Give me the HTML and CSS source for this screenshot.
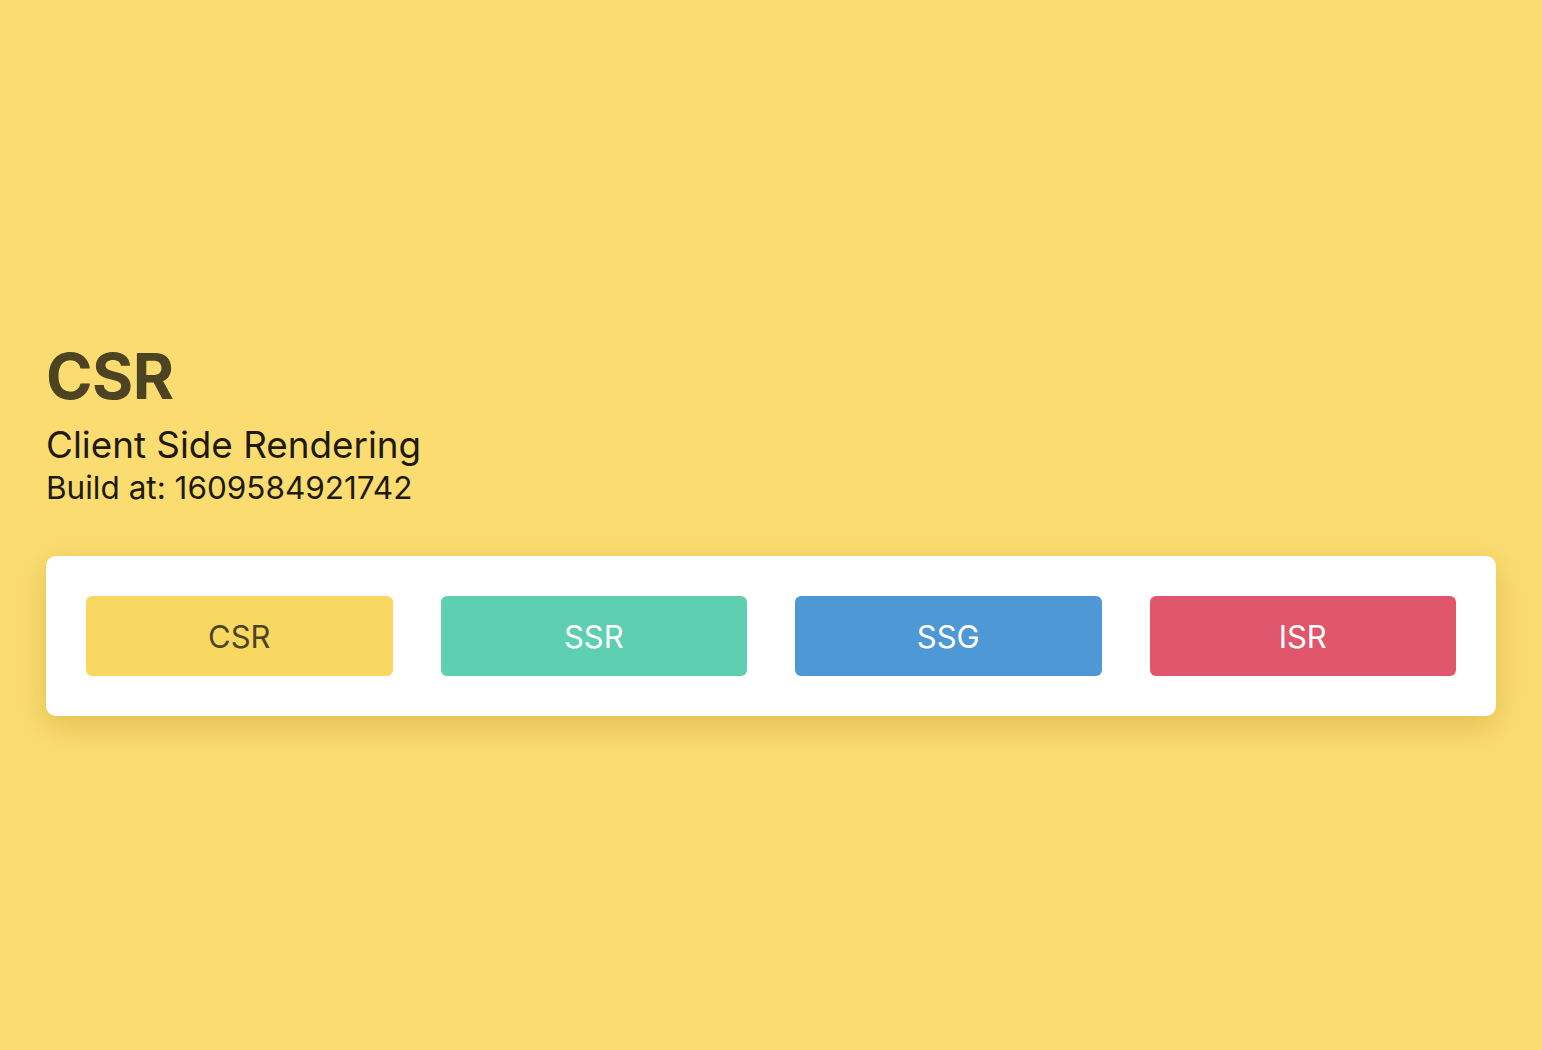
FILE: index.html
```html
<!DOCTYPE html>
<html lang="en">
<head>
<meta charset="utf-8">
<title>CSR</title>
<link rel="stylesheet" href="styles.css">
</head>
<body>
<main class="page">
  <header class="intro">
    <h1 class="title">CSR</h1>
    <p class="subtitle">Client Side Rendering</p>
    <p class="build">Build at: 1609584921742</p>
  </header>
  <nav class="card">
    <a class="btn btn-csr" href="#">CSR</a>
    <a class="btn btn-ssr" href="#">SSR</a>
    <a class="btn btn-ssg" href="#">SSG</a>
    <a class="btn btn-isr" href="#">ISR</a>
  </nav>
</main>
</body>
</html>
```

FILE: styles.css
```css
html, body {
  margin: 0;
  height: 100%;
}
body {
  background: #fadc70;
  font-family: Inter, "Noto Sans", sans-serif;
  color: #1d1a0c;
}
.page {
  height: 100%;
  box-sizing: border-box;
  padding: 0 46px;
  display: flex;
  flex-direction: column;
  justify-content: center;
}
.intro {
  margin-bottom: 47px;
}
.title {
  margin: 0 0 5px;
  font-size: 63px;
  font-weight: 700;
  line-height: 84px;
  color: #4b4322;
  letter-spacing: -0.5px;
}
.subtitle {
  margin: 0;
  font-size: 36.8px;
  line-height: 44px;
}
.build {
  margin: 0;
  font-size: 31.5px;
  line-height: 42px;
}
.card {
  background: #fff;
  border-radius: 10px;
  padding: 40px;
  display: grid;
  grid-template-columns: repeat(4, 1fr);
  gap: 48px;
  box-shadow: 0 10px 30px rgba(180, 140, 30, 0.35);
}
.btn {
  height: 80px;
  border-radius: 6px;
  display: flex;
  align-items: center;
  justify-content: center;
  text-decoration: none;
  font-size: 31px;
  font-weight: 400;
  color: #fff;
}
.btn-csr { background: #f9d862; color: #4b4322; }
.btn-ssr { background: #5ecfb1; }
.btn-ssg { background: #4f98d6; }
.btn-isr { background: #e0566b; }
```
